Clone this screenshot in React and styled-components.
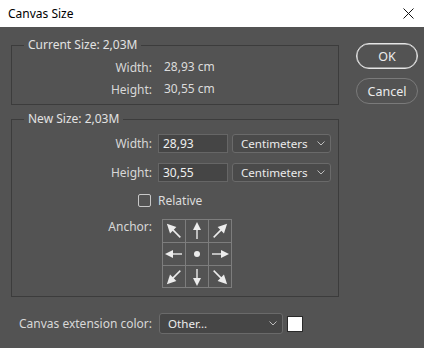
import React from 'react';
import styled, { createGlobalStyle } from 'styled-components';

const GlobalStyle = createGlobalStyle`
  html, body {
    margin: 0;
    padding: 0;
    background: #535353;
  }
  body {
    font-family: "Noto Sans", "Open Sans", sans-serif;
    font-size: 12px;
  }
`;

const Dialog = styled.div`
  width: 424px;
  height: 348px;
  background: #535353;
  color: #dcdcdc;
  overflow: hidden;
`;

const TitleBar = styled.div`
  height: 27px;
  background: #ffffff;
  color: #000;
  display: flex;
  align-items: center;
  justify-content: space-between;
  padding: 0 10px 0 8px;
`;

const Body = styled.div`
  display: flex;
  padding: 10px 0 0 11px;
`;

const LeftColumn = styled.div`
  width: 328px;
  display: flex;
  flex-direction: column;
`;

const Group = styled.fieldset`
  margin: ${p => p.$top || 0}px 0 0 0;
  padding: 0 0 ${p => p.$bottom || 0}px 0;
  border: 1px solid #3c3c3c;
  min-width: 0;
`;

const Legend = styled.legend`
  margin-left: 12px;
  padding: 0 4px;
  line-height: 16px;
  color: #e2e2e2;
`;

const InfoGrid = styled.div`
  display: grid;
  grid-template-columns: 140px 1fr;
  column-gap: 12px;
  padding-top: 3px;
  line-height: 22px;
`;

const FormGrid = styled.div`
  display: grid;
  grid-template-columns: 140px 1fr;
  column-gap: 6px;
  row-gap: 10px;
  padding-top: 7px;
  align-items: center;
`;

const Label = styled.div`
  text-align: right;
  color: #d8d8d8;
  align-self: ${p => p.$top ? 'start' : 'center'};
  line-height: ${p => p.$top ? '16px' : 'normal'};
`;

const Value = styled.div`
  color: #dcdcdc;
`;

const Controls = styled.div`
  display: flex;
  gap: 4px;
`;

const TextInput = styled.div`
  width: 70px;
  height: 19px;
  box-sizing: border-box;
  background: #454545;
  border: 1px solid #666;
  padding-left: 4px;
  line-height: 17px;
  color: #f0f0f0;
`;

const Select = styled.div`
  width: ${p => p.$w}px;
  height: ${p => p.$h}px;
  box-sizing: border-box;
  background: ${p => p.$bg || '#4a4a4a'};
  border: 1px solid #6a6a6a;
  border-radius: 3px;
  padding: 0 5px 0 8px;
  display: flex;
  align-items: center;
  justify-content: space-between;
  color: #ececec;
  font-size: 11.6px;
`;

const CheckBox = styled.div`
  justify-self: end;
  width: 13px;
  height: 13px;
  box-sizing: border-box;
  border: 1px solid #c8c8c8;
  border-radius: 2px;
  margin-right: 1px;
`;

const AnchorGrid = styled.div`
  margin-left: 4px;
  width: 70px;
  display: grid;
  grid-template-columns: repeat(3, 22px);
  grid-template-rows: 22px 22px 21px;
  gap: 1px;
  padding: 1px;
  box-sizing: border-box;
  background: #7d7d7d;
`;

const AnchorCell = styled.div`
  background: #535353;
  display: flex;
  align-items: center;
  justify-content: center;
`;

const RightColumn = styled.div`
  margin-left: 17px;
  padding-top: 6px;
  display: flex;
  flex-direction: column;
  gap: 9px;
`;

const PillButton = styled.div`
  width: 62px;
  height: 26px;
  box-sizing: border-box;
  border-radius: 13px;
  border: 1px solid ${p => p.$primary ? '#e6e6e6' : '#7a7a7a'};
  box-shadow: ${p => p.$primary ? 'inset 0 0 0 0.5px #e6e6e6' : 'none'};
  display: flex;
  align-items: center;
  justify-content: center;
  color: #ececec;
  font-size: 12.5px;
`;

const BottomRow = styled.div`
  display: grid;
  grid-template-columns: 141px auto auto;
  justify-content: start;
  column-gap: 7px;
  align-items: center;
  margin-top: 16px;
`;

const Swatch = styled.div`
  width: 16px;
  height: 16px;
  box-sizing: border-box;
  background: #fff;
  border: 1px solid #2a2a2a;
  margin-left: -3px;
`;

const Chevron = () => (
  <svg width="8" height="5" viewBox="0 0 8 5">
    <path d="M0.5 0.5 L4 4 L7.5 0.5" fill="none" stroke="#bdbdbd" strokeWidth="1" />
  </svg>
);

const CloseIcon = () => (
  <svg width="11" height="11" viewBox="0 0 11 11">
    <path d="M0.5 0.5 L10.5 10.5 M10.5 0.5 L0.5 10.5" stroke="#111" strokeWidth="1" />
  </svg>
);

const Arrow = ({ angle }) => {
  const diag = angle % 90 !== 0;
  const s = diag ? 1.12 : 1;
  return (
    <svg width="22" height="22" viewBox="0 0 22 22">
      <g transform={`rotate(${angle} 11 11) translate(11 11) scale(${s}) translate(-11 -11)`} fill="#ececec">
        <rect x="10.3" y="8" width="1.4" height="11" />
        <polygon points="11,2 7,10 15,10" />
      </g>
    </svg>
  );
};

const anchors = [-45, 0, 45, -90, null, 90, -135, 180, 135];

const App = () => {
  return (
    <Dialog>
      <GlobalStyle />
      <TitleBar>
        <span>Canvas Size</span>
        <CloseIcon />
      </TitleBar>
      <Body>
        <LeftColumn>
          <Group $bottom={4}>
            <Legend>Current Size: 2,03M</Legend>
            <InfoGrid>
              <Label>Width:</Label>
              <Value>28,93 cm</Value>
              <Label>Height:</Label>
              <Value>30,55 cm</Value>
            </InfoGrid>
          </Group>

          <Group $top={6} $bottom={8}>
            <Legend>New Size: 2,03M</Legend>
            <FormGrid>
              <Label>Width:</Label>
              <Controls>
                <TextInput>28,93</TextInput>
                <Select $w={99} $h={19}>Centimeters <Chevron /></Select>
              </Controls>
              <Label>Height:</Label>
              <Controls>
                <TextInput>30,55</TextInput>
                <Select $w={99} $h={19}>Centimeters <Chevron /></Select>
              </Controls>
              <CheckBox />
              <Value>Relative</Value>
              <Label $top>Anchor:</Label>
              <AnchorGrid>
                {anchors.map((a, i) => (
                  <AnchorCell key={i}>
                    {a === null ? (
                      <svg width="8" height="8" viewBox="0 0 8 8"><circle cx="4" cy="4" r="3" fill="#ececec" /></svg>
                    ) : (
                      <Arrow angle={a} />
                    )}
                  </AnchorCell>
                ))}
              </AnchorGrid>
            </FormGrid>
          </Group>

          <BottomRow>
            <Label>Canvas extension color:</Label>
            <Select $w={124} $h={21} $bg="#464646">Other... <Chevron /></Select>
            <Swatch />
          </BottomRow>
        </LeftColumn>

        <RightColumn>
          <PillButton $primary>OK</PillButton>
          <PillButton>Cancel</PillButton>
        </RightColumn>
      </Body>
    </Dialog>
  );
};

export default App;
